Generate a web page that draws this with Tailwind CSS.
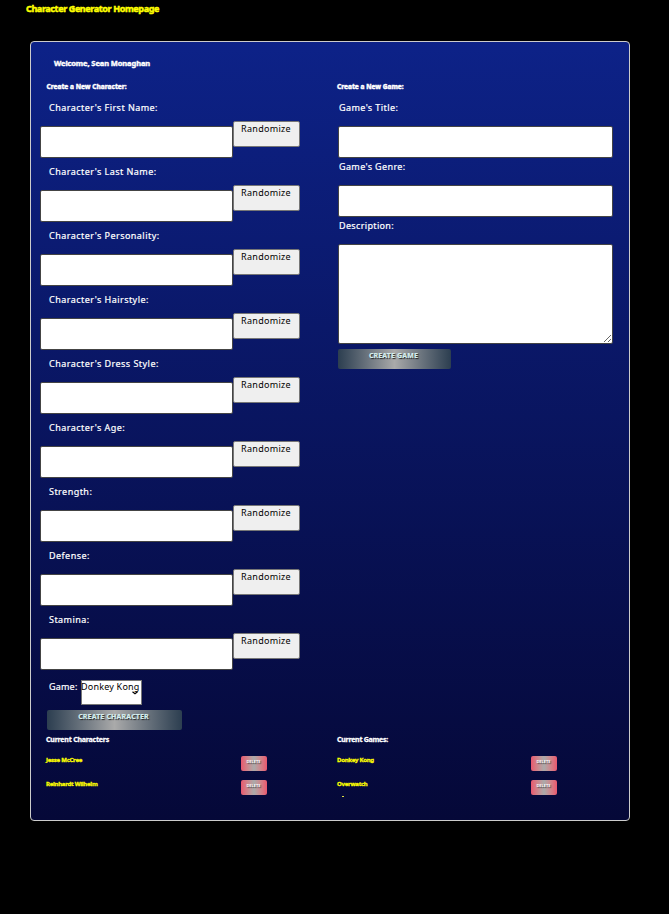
<!DOCTYPE html>
<html lang="en"><head><meta charset="utf-8"><title>Character Generator</title>
<script src="https://cdn.jsdelivr.net/npm/@tailwindcss/browser@4"></script></head>
<body class="bg-black w-[669px] h-[914px] overflow-hidden font-['Noto_Sans',sans-serif] text-white">
<header class="h-[41px] pl-[26px] pt-[2px]"><h1 class="text-[9px] leading-[13px] font-bold tracking-[-0.38px] whitespace-nowrap text-[#ff0] [-webkit-text-stroke:0.5px_#ff0]">Character Generator Homepage</h1></header>
<main class="ml-[30px] w-[600px] h-[780px] rounded border border-[#ccc] bg-linear-to-b from-[#0d2288] to-[#050838] pt-[15px]">
<h2 class="pl-[23px] h-[22px] leading-[12px] text-[7.5px] font-bold tracking-[-0.1px] [-webkit-text-stroke:0.4px_white]">Welcome, Sean Monaghan</h2>
<div class="flex h-[655px]">
<section class="w-[298px]">
<h3 class="pl-[15.5px] pt-[2px] h-[21px] leading-[12px] text-[6.5px] font-extrabold [-webkit-text-stroke:0.4px_white]">Create a New Character:</h3>
<div id="fields"></div>
<div class="flex h-[34px] pl-[18px] pt-[4px]"><label class="w-[32px] text-[9px] leading-[14px] tracking-[0.2px] [-webkit-text-stroke:0.2px_white]">Game:</label><div class="relative w-[61px] h-[25px] border border-[#767676] bg-white text-black text-[9px] leading-[12px] tracking-[0.2px] whitespace-nowrap"><span class="-ml-px">Donkey Kong</span><svg class="absolute left-[50px] top-[10px]" width="6" height="4" viewBox="0 0 6 4"><path d="M.5 .7 3 2.7 5.5 .7" fill="none" stroke="black" stroke-width="1.3"/></svg></div></div>
<button class="block ml-[16px] w-[135px] h-[20px] rounded-[2px] bg-linear-to-r from-[#2c3e50] via-[#aaa] to-[#2c3e50] pb-[6px] pr-[2px] text-[7px] leading-[14px] font-bold tracking-[0.15px] text-[#d5eeee] [-webkit-text-stroke:0.2px_#d5eeee] [text-shadow:1px_1px_1px_#222]">CREATE CHARACTER</button>
</section>
<section class="w-[280px] pl-[9px]">
<h3 class="-ml-[1px] pt-[2px] h-[21px] leading-[12px] text-[6.5px] font-extrabold [-webkit-text-stroke:0.4px_white]">Create a New Game:</h3>
<div class="h-[59px]"><label class="block pl-[1px] pt-px h-[26px] leading-[14px] text-[9px] tracking-[0.42px] [-webkit-text-stroke:0.2px_white]">Game's Title:</label><input class="block w-[275px] h-[32px] rounded-[2px] border border-[#444] bg-white"></div>
<div class="h-[59px]"><label class="block pl-[1px] pt-px h-[26px] leading-[14px] text-[9px] tracking-[0.38px] [-webkit-text-stroke:0.2px_white]">Game's Genre:</label><input class="block w-[275px] h-[32px] rounded-[2px] border border-[#444] bg-white"></div>
<label class="block pl-[1px] pt-px h-[26px] leading-[14px] text-[9px] tracking-[0.35px] [-webkit-text-stroke:0.2px_white]">Description:</label><textarea class="block w-[275px] h-[100px] rounded-[2px] border border-[#444] bg-white"></textarea>
<button class="block mt-[5px] w-[113px] h-[20px] rounded-[2px] bg-linear-to-r from-[#2c3e50] via-[#aaa] to-[#2c3e50] pb-[6px] pr-[2px] text-[7px] leading-[14px] font-bold tracking-[0.15px] text-[#d5eeee] [-webkit-text-stroke:0.2px_#d5eeee] [text-shadow:1px_1px_1px_#222]">CREATE GAME</button>
</section></div>
<div class="flex pl-[15px]">
<section class="w-[291px]"><h3 class="h-[22px] leading-[12px] text-[7px] font-bold tracking-[-0.2px] [-webkit-text-stroke:0.3px_white]">Current Characters</h3><div id="chars" class="pr-0"></div></section>
<section class="w-[280px]"><h3 class="h-[22px] leading-[12px] text-[7px] font-bold tracking-[-0.25px] [-webkit-text-stroke:0.3px_white]">Current Games:</h3><div id="games"></div><div class="ml-[5px] -mt-[8px] w-[2px] h-px bg-[#dd4]"></div></section>
</div>
</main>
<script>
document.getElementById('fields').innerHTML = ["Character's First Name:","Character's Last Name:","Character's Personality:","Character's Hairstyle:","Character's Dress Style:","Character's Age:","Strength:","Defense:","Stamina:"].map(l =>
`<div class="h-[64px] pl-[9px]"><label class="block pl-[9px] pt-px h-[21px] leading-[14px] text-[9px] tracking-[0.46px] [-webkit-text-stroke:0.2px_white]">${l}</label><div class="flex"><input class="block mt-[5px] w-[193px] h-[32px] rounded-[2px] border border-[#444] bg-white"><button class="block w-[67px] h-[26px] rounded-[2px] border border-[#767676] bg-[#efefef] pb-[10px] pr-[1px] text-black text-[9px] leading-[14px] tracking-[0.3px]">Randomize</button></div></div>`).join('');
const list = (id, names, width) => document.getElementById(id).innerHTML = names.map(n =>
`<div class="flex h-[24px]"><a class="${width} -mt-[2px] h-[12px] leading-[12px] text-[6px] font-bold tracking-[-0.25px] text-[#ff0] [-webkit-text-stroke:0.3px_#ff0]">${n}</a><button class="block w-[26px] h-[15px] rounded-[2px] bg-linear-to-r from-[#e8566f] via-[#aaa] to-[#e8566f] pb-[3px] pr-[1px] text-[4px] leading-[12px] font-bold text-white [text-shadow:1px_1px_1px_#444]">DELETE</button></div>`).join('');
list('chars', ['Jesse McCree', 'Reinhardt Wilhelm'], 'w-[195px]');
list('games', ['Donkey Kong', 'Overwatch'], 'w-[194px]');
</script>
</body></html>
